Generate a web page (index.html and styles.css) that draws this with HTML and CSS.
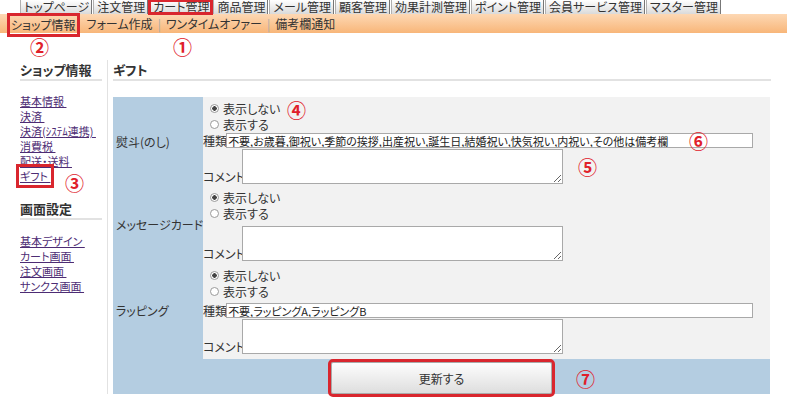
FILE: index.html
```html
<!DOCTYPE html>
<html lang="ja">
<head>
    <meta charset="UTF-8">
    <meta name="viewport" content="width=device-width, initial-scale=1.0">
    <title>ギフト - ショップ情報</title>
    <link rel="stylesheet" href="styles.css">
</head>
<body>
    <div class="tabs">
        <a class="tab" href="#">トップページ</a>
        <a class="tab" href="#">注文管理</a>
        <a class="tab tab-active marked" href="#">カート管理</a>
        <a class="tab" href="#">商品管理</a>
        <a class="tab" href="#">メール管理</a>
        <a class="tab" href="#">顧客管理</a>
        <a class="tab" href="#">効果計測管理</a>
        <a class="tab" href="#">ポイント管理</a>
        <a class="tab" href="#">会員サービス管理</a>
        <a class="tab" href="#">マスター管理</a>
    </div>
    <div class="subnav">
        <a class="sub-item sub-current marked" href="#">ショップ情報</a>
        <a class="sub-item" href="#">フォーム作成</a>
        <span class="sep">|</span>
        <a class="sub-item" href="#">ワンタイムオファー</a>
        <span class="sep">|</span>
        <a class="sub-item" href="#">備考欄通知</a>
    </div>
    <div class="main">
        <div class="side">
            <h3 class="side-title">ショップ情報</h3>
            <ul class="side-links">
                <li><a href="#">基本情報&nbsp;</a></li>
                <li><a href="#">決済&nbsp;</a></li>
                <li><a href="#">決済(ｼｽﾃﾑ連携)&nbsp;</a></li>
                <li><a href="#">消費税&nbsp;</a></li>
                <li><a href="#">配送・送料&nbsp;</a></li>
                <li><a class="gift-link marked" href="#">ギフト&nbsp;</a></li>
            </ul>
            <h3 class="side-title side-title-second">画面設定</h3>
            <ul class="side-links side-links-second">
                <li><a href="#">基本デザイン&nbsp;</a></li>
                <li><a href="#">カート画面&nbsp;</a></li>
                <li><a href="#">注文画面&nbsp;</a></li>
                <li><a href="#">サンクス画面&nbsp;</a></li>
            </ul>
        </div>
        <div class="content">
            <h2 class="page-title">ギフト</h2>
            <form>
                <table class="gift-table">
                    <tr class="row-noshi">
                        <th>熨斗(のし)</th>
                        <td>
                            <label class="radio-line"><input type="radio" name="noshi" checked>表示しない</label>
                            <label class="radio-line"><input type="radio" name="noshi">表示する</label>
                            <div class="field-line noshi-kind"><span class="field-label">種類</span><input class="kind-input" type="text" value="不要,お歳暮,御祝い,季節の挨拶,出産祝い,誕生日,結婚祝い,快気祝い,内祝い,その他は備考欄"></div>
                            <div class="field-line comment-line"><span class="field-label">コメント</span><textarea class="comment-box"></textarea></div>
                        </td>
                    </tr>
                    <tr class="row-card">
                        <th>メッセージカード</th>
                        <td>
                            <label class="radio-line"><input type="radio" name="card" checked>表示しない</label>
                            <label class="radio-line"><input type="radio" name="card">表示する</label>
                            <div class="field-line comment-line card-comment"><span class="field-label">コメント</span><textarea class="comment-box"></textarea></div>
                        </td>
                    </tr>
                    <tr class="row-wrap">
                        <th>ラッピング</th>
                        <td>
                            <label class="radio-line radio-first-wrap"><input type="radio" name="wrap" checked>表示しない</label>
                            <label class="radio-line"><input type="radio" name="wrap">表示する</label>
                            <div class="field-line wrap-kind"><span class="field-label">種類</span><input class="kind-input" type="text" value="不要,ラッピングA,ラッピングB"></div>
                            <div class="field-line comment-line"><span class="field-label">コメント</span><textarea class="comment-box"></textarea></div>
                        </td>
                    </tr>
                    <tr class="row-submit">
                        <td colspan="2"><button class="submit-btn marked" type="button">更新する</button></td>
                    </tr>
                </table>
            </form>
        </div>
    </div>

    <!-- annotation numbers -->
    <span class="mark mark-1">①</span>
    <span class="mark mark-2">②</span>
    <span class="mark mark-3">③</span>
    <span class="mark mark-4">④</span>
    <span class="mark mark-5">⑤</span>
    <span class="mark mark-6">⑥</span>
    <span class="mark mark-7">⑦</span>
</body>
</html>
```

FILE: styles.css
```css
body {
    margin: 0;
    font-family: "Noto Sans CJK JP", "Liberation Sans", sans-serif;
    font-size: 12px;
    font-feature-settings: "palt";
    color: #333;
    background: #fff;
    position: relative;
    width: 787px;
    height: 398px;
    overflow: hidden;
}
a {
    color: inherit;
    text-decoration: none;
}
.marked {
    outline: 3px solid #d9262e;
}

/* top tabs */
.tabs {
    display: flex;
    height: 14px;
    padding-left: 20px;
}
.tab {
    display: block;
    height: 14px;
    line-height: 14px;
    padding: 0 2px 0 3px;
    margin-right: 1px;
    border-left: 1px solid #b0b0b0;
    border-right: 1px solid #777;
    background: linear-gradient(#ffffff, #dadada);
    color: #333;
    white-space: nowrap;
}
.tab-active {
    outline-offset: -2px;
}

/* orange sub menu */
.subnav {
    display: flex;
    align-items: center;
    height: 19px;
    padding-left: 10px;
    background: linear-gradient(#fdd8b4, #f8b679);
}
.sub-item {
    line-height: 15px;
    color: #333;
}
.sub-current {
    padding: 1px 1px 2px 1px;
    margin-right: 10px;
    margin-top: 2px;
}
.sep {
    color: #aaa;
    margin: 0 5px;
}

/* page */
.main {
    display: flex;
    padding-top: 27px;
}
.side {
    width: 82px;
    margin-left: 20px;
    margin-right: 5px;
}
.side-title {
    margin: 1px 0 0;
    font-size: 13px;
    line-height: 18px;
    font-weight: bold;
    color: #333;
    border-bottom: 2px solid #e2e2e2;
}
.side-title-second {
    margin-top: 16px;
}
.side-links {
    list-style: none;
    margin: 13px 0 0;
    padding: 0;
}
.side-links-second {
    margin-top: 14px;
}
.side-links li {
    line-height: 15px;
    font-size: 11px;
}
.side-links a {
    color: #4d2c74;
    text-decoration: underline;
}
.gift-link {
    outline-offset: 1px;
}
.content {
    width: 658px;
    padding-left: 5px;
    border-left: 1px solid #e2e2e2;
}
.page-title {
    margin: 1px 0 0;
    font-size: 13px;
    line-height: 18px;
    font-weight: bold;
    color: #333;
    border-bottom: 2px solid #e2e2e2;
}
form {
    margin: 16px 0 0;
}

/* gift table */
.gift-table {
    width: 657px;
    border-collapse: collapse;
    border-spacing: 0;
}
.gift-table th {
    width: 86px;
    padding: 0 0 0 3px;
    background: #b4cde1;
    font-weight: normal;
    text-align: left;
    vertical-align: middle;
    white-space: nowrap;
}
.gift-table td {
    padding: 3px 0 0 0;
    background: #f2f2f2;
    vertical-align: top;
}
.row-noshi th { height: 89px; }
.row-card th { height: 76px; }
.row-wrap th { height: 97px; }
.radio-line {
    display: flex;
    align-items: center;
    height: 16px;
}
.radio-first-wrap {
    margin-top: 2px;
}
.radio-line input {
    appearance: none;
    width: 9px;
    height: 9px;
    margin: 0 4px 0 7px;
    border: 1px solid #9a9a9a;
    border-radius: 50%;
    background: #fff;
}
.radio-line input:checked {
    background: radial-gradient(circle, #444 0 2px, #fff 2.5px);
}
.field-line {
    display: flex;
}
.field-label {
    white-space: nowrap;
    line-height: 15px;
}
.kind-input {
    box-sizing: border-box;
    width: 527px;
    height: 15px;
    margin: 0 0 0 -1px;
    padding: 0 1px;
    border: 1px solid #a9a9a9;
    font: inherit;
    font-size: 11px;
    line-height: 13px;
    color: #222;
    background: #fff;
}
.noshi-kind {
    margin-top: 1px;
}
.wrap-kind {
    margin-top: 4px;
}
.comment-line {
    align-items: flex-end;
    margin-top: 1px;
}
.card-comment {
    margin-top: 5px;
}
.comment-box {
    box-sizing: border-box;
    width: 321px;
    height: 35px;
    margin: 0 0 0 -3px;
    border: 1px solid #a9a9a9;
    font: inherit;
    background: #fff;
}
.row-submit td {
    height: 34px;
    padding: 0;
    background: #b4cde1;
    text-align: center;
    vertical-align: top;
}
.submit-btn {
    width: 221px;
    height: 32px;
    margin-top: 3px;
    border: 1px solid #aaa;
    border-radius: 2px;
    background: linear-gradient(#fdfdfd, #dedede);
    font: inherit;
    color: #333;
    outline-offset: 0;
}

/* red annotation numbers */
.mark {
    position: absolute;
    font-size: 19px;
    line-height: 20px;
    font-weight: bold;
    color: #e0202a;
}
.mark-1 { left: 173px; top: 37px; }
.mark-2 { left: 30px; top: 37px; }
.mark-3 { left: 65px; top: 173px; }
.mark-4 { left: 287px; top: 100px; }
.mark-5 { left: 578px; top: 157px; }
.mark-6 { left: 689px; top: 131px; }
.mark-7 { left: 576px; top: 369px; }
```
